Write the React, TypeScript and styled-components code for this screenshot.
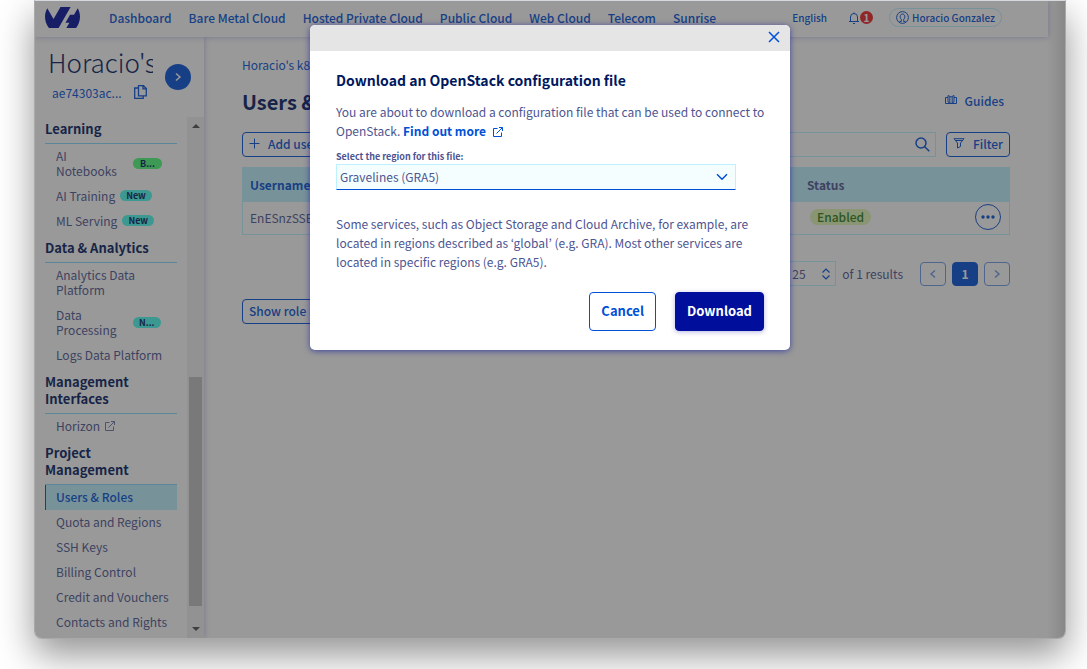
import React from 'react';
import styled, { createGlobalStyle, css } from 'styled-components';

const blue = '#0050d7';
const navy = '#00185e';
const text = '#4d5592';
const pale = '#bef1ff';

const GlobalStyle = createGlobalStyle`
  *, *::before, *::after { box-sizing: border-box; }
  body {
    margin: 0;
    background: #fff;
    color: ${text};
    font: 400 12px/19px "Noto Sans CJK KR", "Noto Sans", sans-serif;
  }
  button, input, select { font: inherit; color: inherit; margin: 0; }
  a { color: ${blue}; text-decoration: none; }
  h1, h2, h3, p, ul { margin: 0; padding: 0; }
  ul { list-style: none; }
`;

const Stage = styled.div`
  min-height: 100vh;
  padding: 0 21px 30px 34px;
  overflow: hidden;
`;

const Window = styled.div`
  position: relative;
  display: flex;
  flex-direction: column;
  min-height: calc(100vh - 30px);
  border: 1px solid #a9a9a9;
  border-top-color: #d5d8dd;
  border-radius: 0 0 8px 8px;
  box-shadow: 0 16px 36px rgba(0, 0, 0, 0.42);
  background: #fff;
  overflow: hidden;
`;

const TopBar = styled.header`
  position: relative;
  z-index: 1;
  display: flex;
  align-items: center;
  height: 36px;
  margin-right: 17px;
  padding: 0 46px 3px 10px;
  background: #fff;
  box-shadow: 0 0 6px rgba(0, 14, 156, 0.3);
`;

const Logo = styled.svg`
  width: 35px;
  height: 21px;
  margin-right: 29px;
  fill: #000e9c;
`;

const MainNav = styled.nav`
  display: flex;
  flex: 1;
  gap: 17px;
  a { white-space: nowrap; font-weight: 500; }
`;

const Account = styled.div`
  display: flex;
  align-items: center;
  font-size: 10px;
  font-weight: 500;
  color: ${blue};
`;

const PlainButton = styled.button`
  display: inline-flex;
  align-items: center;
  padding: 0;
  border: 0;
  background: none;
  color: ${blue};
  cursor: pointer;
`;

const Bell = styled(PlainButton)`
  margin: 0 16px 0 21px;
`;

const Count = styled.span`
  width: 13px;
  border-radius: 50%;
  background: #ed1f23;
  color: #fff;
  font-weight: 700;
  line-height: 13px;
  text-align: center;
`;

const UserPill = styled(PlainButton)`
  gap: 3px;
  height: 19px;
  padding: 0 6px;
  border: 1px solid ${pale};
  border-radius: 10px;
  white-space: nowrap;
`;

const Columns = styled.div`
  display: flex;
  flex: 1;
`;

const Sidebar = styled.aside`
  display: flex;
  flex-direction: column;
  flex: none;
  width: 169px;
  box-shadow: 0 0 6px rgba(0, 14, 156, 0.3);
`;

const Project = styled.div`
  display: flex;
  align-items: center;
  gap: 12px;
  height: 80px;
  padding: 0 13px 0 13px;
`;

const ProjectInfo = styled.div`
  flex: 1;
  min-width: 0;
  padding-bottom: 4px;
`;

const ProjectName = styled.h2`
  overflow: hidden;
  color: ${navy};
  font-size: 26px;
  font-weight: 300;
  line-height: 34px;
  white-space: nowrap;
`;

const ProjectId = styled.div`
  display: flex;
  align-items: center;
  justify-content: space-between;
  height: 26px;
  padding: 0 6px 0 4px;
  color: ${blue};
`;

const RoundButton = styled.button`
  display: grid;
  place-items: center;
  flex: none;
  width: 26px;
  height: 26px;
  padding: 0;
  border: 0;
  border-radius: 50%;
  background: ${blue};
  color: #fff;
`;

const SideScroll = styled.div`
  display: flex;
  flex: 1;
`;

const SideNav = styled.nav`
  display: flex;
  flex: 1;
  flex-direction: column;
  gap: 2px;
  min-width: 0;
  padding: 0 10px 2px;
`;

const SideTitle = styled.h3`
  padding: 3px 0 6px;
  border-bottom: 1px solid #85d9fd;
  color: ${navy};
  font-size: 13px;
  font-weight: 700;
  line-height: 17px;
`;

const SideLink = styled.a<{ $active?: boolean }>`
  display: flex;
  align-items: center;
  gap: 5px;
  padding: 4px 0 6px 11px;
  color: ${text};
  line-height: 15px;
  ${({ $active }) => $active && css`
    padding-left: 10px;
    border-left: 1px solid ${blue};
    background: ${pale};
    color: ${blue};
    font-weight: 500;
  `}
`;

const SideLabel = styled.span<{ $narrow?: boolean }>`
  width: ${({ $narrow }) => ($narrow ? '72px' : 'auto')};
`;

const Tag = styled.span<{ $green?: boolean }>`
  padding: 0 ${({ $green }) => ($green ? '7px' : '6px')};
  border-radius: 6px;
  background: ${({ $green }) => ($green ? '#4bff78' : '#48fff0')};
  color: ${navy};
  font-size: 9px;
  font-weight: 700;
  line-height: 11px;
`;

const SideExternal = styled.span`
  display: inline-flex;
  opacity: 0.8;
`;

const ScrollTrack = styled.div`
  display: flex;
  flex: none;
  flex-direction: column;
  align-items: center;
  width: 17px;
  padding: 7px 0;
  background: #f1f1f1;
`;

const ScrollThumb = styled.div`
  width: 13px;
  height: 229px;
  margin: auto 0 21px;
  background: #c1c1c1;
`;

const Arrow = styled.i<{ $down?: boolean }>`
  border: 4px solid transparent;
  border-${({ $down }) => ($down ? 'bottom' : 'top')}-width: 0;
  border-${({ $down }) => ($down ? 'top' : 'bottom')}-color: #505050;
`;

const Main = styled.main`
  flex: 1;
  min-width: 0;
  padding: 18px 55px 0 38px;
`;

const TitleRow = styled.div`
  display: flex;
  align-items: center;
  justify-content: space-between;
  height: 34px;
  margin: 11px 0 13px;
  padding-right: 6px;
`;

const PageTitle = styled.h1`
  color: ${navy};
  font-size: 20px;
  font-weight: 700;
  line-height: 26px;
`;

const Guides = styled(PlainButton)`
  gap: 8px;
  padding-bottom: 4px;
  font-weight: 500;
`;

const Toolbar = styled.div`
  display: flex;
  justify-content: space-between;
  margin-bottom: 10px;
`;

const OutlineButton = styled.button`
  display: inline-flex;
  align-items: center;
  gap: 8px;
  height: 25px;
  padding: 0 6px 2px;
  border: 1px solid ${blue};
  border-radius: 4px;
  background: #fff;
  color: ${blue};
  font-weight: 500;
  white-space: nowrap;
`;

const Tools = styled.div`
  display: flex;
  gap: 10px;
`;

const SearchBox = styled.label`
  display: flex;
  align-items: center;
  width: 240px;
  padding-right: 5px;
  border: 1px solid ${pale};
  color: ${blue};
  input { flex: 1; min-width: 0; border: 0; background: none; outline: 0; }
`;

const Table = styled.table`
  width: 100%;
  border: 1px solid ${pale};
  border-spacing: 0;
  table-layout: fixed;
  text-align: left;
  th { height: 34px; padding: 0 7px 1px; background: ${pale}; font-weight: 700; }
  th:first-child { color: ${blue}; }
  td { height: 32px; padding: 0 7px 2px; }
  td:last-child { padding-right: 8px; }
`;

const StatusCell = styled.div`
  display: flex;
  align-items: center;
  justify-content: space-between;
`;

const Status = styled.span`
  margin-left: 3px;
  padding: 0 7px;
  border-radius: 8px;
  background: #e0f7b4;
  color: #2b7d10;
  font-weight: 500;
  line-height: 16px;
`;

const MoreButton = styled.button`
  display: grid;
  place-items: center;
  width: 26px;
  height: 26px;
  padding: 0;
  border: 1px solid ${blue};
  border-radius: 50%;
  background: #fff;
  color: ${blue};
`;

const Pagination = styled.div`
  display: flex;
  align-items: center;
  justify-content: flex-end;
  gap: 6px;
  margin: 26px 0 13px;
`;

const PageSize = styled.span`
  display: flex;
  align-items: center;
  height: 25px;
  padding-right: 4px;
  border: 1px solid ${pale};
  color: ${blue};
  select { width: 33px; padding: 0 4px; border: 0; background: none; color: ${text}; appearance: none; }
`;

const Results = styled.span`
  margin-right: 11px;
`;

const PageButton = styled.button<{ $current?: boolean }>`
  display: grid;
  place-items: center;
  width: 26px;
  height: 24px;
  padding: 0;
  border: 1px solid ${({ $current }) => ($current ? blue : '#6f9ae6')};
  border-radius: 4px;
  background: ${({ $current }) => ($current ? blue : '#fff')};
  color: ${({ $current }) => ($current ? '#fff' : '#6f9ae6')};
  font-weight: 700;
`;

const Backdrop = styled.div`
  position: absolute;
  z-index: 2;
  inset: 0;
  padding-top: 24px;
  background: linear-gradient(to left, rgba(60, 70, 60, 0.2), transparent 18px), rgba(46, 46, 46, 0.49);
`;

const Dialog = styled.section`
  max-width: 480px;
  margin: 0 auto;
  border-radius: 5px;
  background: #fff;
  box-shadow: 0 1px 6px rgba(0, 14, 156, 0.6);
  overflow: hidden;
`;

const DialogBar = styled.div`
  display: flex;
  align-items: center;
  justify-content: flex-end;
  height: 26px;
  padding: 0 10px 2px;
  background: #e5e5e5;
`;

const DialogBody = styled.div`
  padding: 19px 18px 19px 26px;
`;

const DialogTitle = styled.h2`
  margin-bottom: 11px;
  color: ${navy};
  font-size: 14px;
  font-weight: 700;
  line-height: 21px;
`;

const MoreLink = styled.a`
  font-weight: 700;
  svg { margin-left: 4px; vertical-align: -1px; }
`;

const Label = styled.label`
  display: block;
  margin-top: 10px;
  font-size: 9px;
  font-weight: 700;
  line-height: 14px;
`;

const SelectBox = styled.div`
  display: flex;
  align-items: center;
  width: 400px;
  max-width: 100%;
  height: 26px;
  margin-bottom: 24px;
  padding-right: 7px;
  border: 1px solid ${pale};
  border-bottom-color: ${blue};
  background: #f5feff;
  color: ${blue};
  select { flex: 1; height: 24px; padding: 0 3px 1px; border: 0; background: none; color: ${text}; appearance: none; outline: 0; }
`;

const Actions = styled.div`
  display: flex;
  justify-content: flex-end;
  gap: 19px;
  margin: 21px 8px 0 0;
`;

const ActionButton = styled.button<{ $primary?: boolean }>`
  height: 39px;
  padding: 0 11px 2px;
  border: 1px solid ${({ $primary }) => ($primary ? '#000e9c' : blue)};
  border-radius: 4px;
  background: ${({ $primary }) => ($primary ? '#000e9c' : '#fff')};
  box-shadow: ${({ $primary }) => ($primary ? '0 1px 5px rgba(0, 14, 156, 0.3)' : 'none')};
  color: ${({ $primary }) => ($primary ? '#fff' : blue)};
  font-size: 13px;
  font-weight: 700;
`;

const Stroke = styled.svg`
  flex: none;
  fill: none;
  stroke: currentColor;
`;

const ExternalIcon = () => (
  <Stroke width="10" height="10" viewBox="0 0 10 10">
    <path d="M4.500 1.500H.5v8h8V5.500M6 .5h3.500V4M9.500 .5L3.500 6.500" />
  </Stroke>
);

const Chevron = ({ left }: { left?: boolean }) => (
  <Stroke width="8" height="10" viewBox="0 0 8 10" strokeWidth="1.5">
    <path d={left ? 'M6 1.500L2 5l4 3.500' : 'M2 1.500L6 5 2 8.500'} />
  </Stroke>
);

type Item = { label: string; tag?: string; green?: boolean; narrow?: boolean; external?: boolean; active?: boolean };

const sections: { title: string; items: Item[] }[] = [
  {
    title: 'Learning',
    items: [
      { label: 'AI Notebooks', tag: 'B...', green: true, narrow: true },
      { label: 'AI Training', tag: 'New' },
      { label: 'ML Serving', tag: 'New' },
    ],
  },
  {
    title: 'Data & Analytics',
    items: [
      { label: 'Analytics Data Platform' },
      { label: 'Data Processing', tag: 'N...', narrow: true },
      { label: 'Logs Data Platform' },
    ],
  },
  { title: 'Management Interfaces', items: [{ label: 'Horizon', external: true }] },
  {
    title: 'Project Management',
    items: [
      { label: 'Users & Roles', active: true },
      { label: 'Quota and Regions' },
      { label: 'SSH Keys' },
      { label: 'Billing Control' },
      { label: 'Credit and Vouchers' },
      { label: 'Contacts and Rights' },
    ],
  },
];

const universes = ['Dashboard', 'Bare Metal Cloud', 'Hosted Private Cloud', 'Public Cloud', 'Web Cloud', 'Telecom', 'Sunrise'];

export default function App() {
  return (
    <Stage>
      <GlobalStyle />
      <Window>
        <TopBar>
          <Logo viewBox="0 4.850 24 14.300" preserveAspectRatio="none" aria-label="OVHcloud">
            <path d="M19.881 10.095l2.563-4.450C23.434 7.389 24 9.404 24 11.555c0 2.880-1.017 5.523-2.710 7.594h-6.620l2.040-3.541h-2.696l3.176-5.513h2.691zm-2.320-5.243L9.333 19.140l.003.009H2.709C1.014 17.077 0 14.435 0 11.555c0-2.152.570-4.170 1.561-5.918L5.855 13.100l4.754-8.249h6.952z" />
          </Logo>
          <MainNav>
            {universes.map((name) => <a href="#" key={name}>{name}</a>)}
          </MainNav>
          <Account>
            <PlainButton>English</PlainButton>
            <Bell aria-label="Notifications">
              <Stroke width="12" height="12" viewBox="0 0 12 12">
                <path d="M1 9.500h10M2.500 9.500V5a3.500 3.500 0 0 1 7 0v4.500M6 .5v1M5 11.500h2" />
              </Stroke>
              <Count>1</Count>
            </Bell>
            <UserPill>
              <Stroke width="13" height="13" viewBox="0 0 13 13">
                <circle cx="6.500" cy="6.500" r="5.900" />
                <path d="M3.500 10.500h1.800V8.300C3.300 6.800 4 3 6.500 3s3.200 3.800 1.200 5.300v2.200h1.800" />
              </Stroke>
              Horacio Gonzalez
            </UserPill>
          </Account>
        </TopBar>

        <Columns>
          <Sidebar>
            <Project>
              <ProjectInfo>
                <ProjectName>Horacio's</ProjectName>
                <ProjectId>
                  ae74303ac...
                  <PlainButton aria-label="Copy project ID">
                    <Stroke width="13" height="14" viewBox="0 0 13 14" strokeWidth="1.300">
                      <path d="M4.500 .7h5l2.800 2.800v7.300H4.500zM9 .7v3.200h3.300M4.500 3H.7v10.300h8.500v-2.500" />
                    </Stroke>
                  </PlainButton>
                </ProjectId>
              </ProjectInfo>
              <RoundButton aria-label="Expand"><Chevron /></RoundButton>
            </Project>
            <SideScroll>
              <SideNav>
                {sections.map((section) => (
                  <div key={section.title}>
                    <SideTitle>{section.title}</SideTitle>
                    <ul>
                      {section.items.map((item) => (
                        <li key={item.label}>
                          <SideLink href="#" $active={item.active}>
                            <SideLabel $narrow={item.narrow}>{item.label}</SideLabel>
                            {item.tag && <Tag $green={item.green}>{item.tag}</Tag>}
                            {item.external && <SideExternal><ExternalIcon /></SideExternal>}
                          </SideLink>
                        </li>
                      ))}
                    </ul>
                  </div>
                ))}
              </SideNav>
              <ScrollTrack>
                <Arrow />
                <ScrollThumb />
                <Arrow $down />
              </ScrollTrack>
            </SideScroll>
          </Sidebar>

          <Main>
            <a href="#">Horacio's k8s</a>
            <TitleRow>
              <PageTitle>Users &amp; Roles</PageTitle>
              <Guides>
                <Stroke width="12" height="10" viewBox="0 0 12 10">
                  <path d="M3 2.500H.5v6h11v-6H9M3 .5v6.500l3 1.500 3-1.500V.5L6 2zM4.800 1.500v6M7.200 1.500v6" />
                </Stroke>
                Guides
              </Guides>
            </TitleRow>
            <Toolbar>
              <OutlineButton>
                <Stroke width="11" height="11" viewBox="0 0 11 11"><path d="M5.500 .5v10M.5 5.500h10" /></Stroke>
                Add user
              </OutlineButton>
              <Tools>
                <SearchBox>
                  <input type="search" aria-label="Search users" />
                  <Stroke width="15" height="15" viewBox="0 0 15 15" strokeWidth="1.500">
                    <circle cx="6" cy="6" r="5" /><path d="M9.700 9.700l4.600 4.600" />
                  </Stroke>
                </SearchBox>
                <OutlineButton>
                  <Stroke width="12" height="11" viewBox="0 0 12 11">
                    <path d="M1 .7h10L7.500 5v3.500l-3 1.500V5zM2.500 2.500h7" />
                  </Stroke>
                  Filter
                </OutlineButton>
              </Tools>
            </Toolbar>
            <Table>
              <colgroup><col /><col width="209" /></colgroup>
              <thead>
                <tr><th>Username</th><th>Status</th></tr>
              </thead>
              <tbody>
                <tr>
                  <td>EnESnzSSE</td>
                  <td>
                    <StatusCell>
                      <Status>Enabled</Status>
                      <MoreButton aria-label="Actions">
                        <svg width="14" height="4" fill="currentColor">
                          <circle cx="2" cy="2" r="1.700" /><circle cx="7" cy="2" r="1.700" /><circle cx="12" cy="2" r="1.700" />
                        </svg>
                      </MoreButton>
                    </StatusCell>
                  </td>
                </tr>
              </tbody>
            </Table>
            <Pagination>
              <PageSize>
                <select aria-label="Results per page" defaultValue="25"><option>25</option></select>
                <Stroke width="10" height="12" viewBox="0 0 10 12" strokeWidth="1.200">
                  <path d="M1.500 4.500L5 1l3.500 3.500M1.500 7.500L5 11l3.500-3.500" />
                </Stroke>
              </PageSize>
              <Results>of 1 results</Results>
              <PageButton aria-label="Previous page"><Chevron left /></PageButton>
              <PageButton $current>1</PageButton>
              <PageButton aria-label="Next page"><Chevron /></PageButton>
            </Pagination>
            <OutlineButton>Show role names</OutlineButton>
          </Main>
        </Columns>

        <Backdrop>
          <Dialog role="dialog" aria-labelledby="dialog-title">
            <DialogBar>
              <PlainButton aria-label="Close">
                <Stroke width="12" height="12" viewBox="0 0 12 12" strokeWidth="1.500">
                  <path d="M1 1l10 10M11 1L1 11" />
                </Stroke>
              </PlainButton>
            </DialogBar>
            <DialogBody>
              <DialogTitle id="dialog-title">Download an OpenStack configuration file</DialogTitle>
              <p>
                You are about to download a configuration file that can be used to connect to OpenStack.{' '}
                <MoreLink href="#">Find out more <ExternalIcon /></MoreLink>
              </p>
              <Label htmlFor="region">Select the region for this file:</Label>
              <SelectBox>
                <select id="region" defaultValue="GRA5"><option value="GRA5">Gravelines (GRA5)</option></select>
                <Stroke width="12" height="8" viewBox="0 0 12 8" strokeWidth="1.500">
                  <path d="M1 1.200l5 5 5-5" />
                </Stroke>
              </SelectBox>
              <p>
                Some services, such as Object Storage and Cloud Archive, for example, are located in regions
                described as ‘global’ (e.g. GRA). Most other services are located in specific regions (e.g. GRA5).
              </p>
              <Actions>
                <ActionButton>Cancel</ActionButton>
                <ActionButton $primary>Download</ActionButton>
              </Actions>
            </DialogBody>
          </Dialog>
        </Backdrop>
      </Window>
    </Stage>
  );
}
